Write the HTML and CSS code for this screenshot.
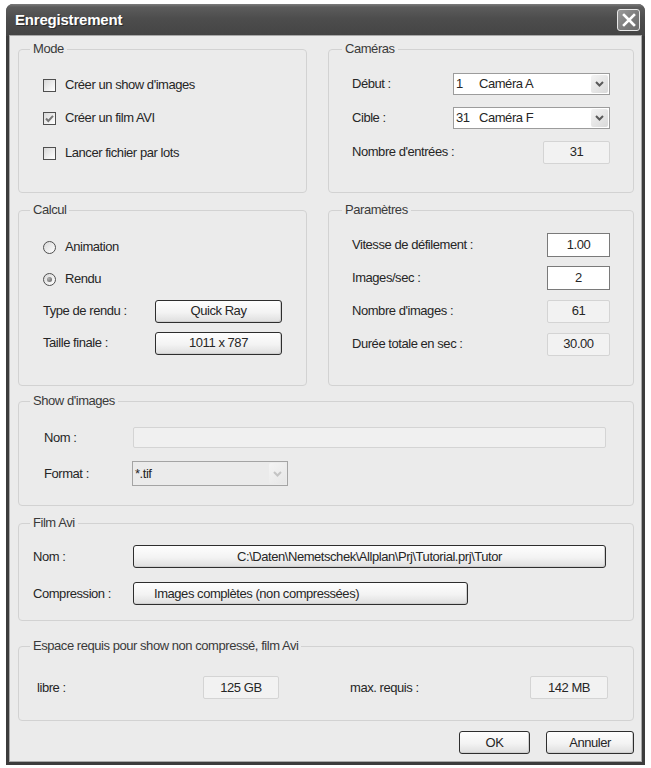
FILE: index.html
```html
<!DOCTYPE html>
<html lang="fr">
<head>
  <meta charset="UTF-8">
  <title>Enregistrement</title>
  <link rel="stylesheet" href="styles.css">
</head>
<body>
  <div class="window">
    <header class="titlebar">
      <span class="title">Enregistrement</span>
      <button class="close" aria-label="Fermer">
        <svg width="14" height="14" viewBox="0 0 14 14"><path d="M2 2 L12 12 M12 2 L2 12" stroke="#fff" stroke-width="2.6" stroke-linecap="square"/></svg>
      </button>
    </header>

    <div class="dialog">
      <div class="pair pair-top">
        <section class="group group-mode">
          <span class="legend">Mode</span>
          <label class="check"><span class="box"></span>Créer un show d'images</label>
          <label class="check"><span class="box"><svg width="11" height="11" viewBox="0 0 11 11"><path d="M2 5.5 L4.3 8 L9 2.8" fill="none" stroke="#767676" stroke-width="2"/></svg></span>Créer un film AVI</label>
          <label class="check"><span class="box"></span>Lancer fichier par lots</label>
        </section>

        <section class="group group-cams">
          <span class="legend">Caméras</span>
          <div class="row">
            <span class="lbl lbl-cam">Début :</span>
            <div class="combo combo-cam">
              <span class="combo-text"><span class="num">1</span>Caméra A</span>
              <span class="combo-btn"><svg width="9" height="6" viewBox="0 0 9 6"><path d="M1 1 L4.5 4.5 L8 1" fill="none" stroke="#5a5a5a" stroke-width="2"/></svg></span>
            </div>
          </div>
          <div class="row">
            <span class="lbl lbl-cam">Cible :</span>
            <div class="combo combo-cam">
              <span class="combo-text"><span class="num">31</span>Caméra F</span>
              <span class="combo-btn"><svg width="9" height="6" viewBox="0 0 9 6"><path d="M1 1 L4.5 4.5 L8 1" fill="none" stroke="#5a5a5a" stroke-width="2"/></svg></span>
            </div>
          </div>
          <div class="row">
            <span class="lbl">Nombre d'entrées :</span>
            <span class="readout readout-cam">31</span>
          </div>
        </section>
      </div>

      <div class="pair pair-mid">
        <section class="group group-calc">
          <span class="legend">Calcul</span>
          <label class="radio"><span class="dot"></span>Animation</label>
          <label class="radio"><span class="dot on"></span>Rendu</label>
          <div class="row">
            <span class="lbl lbl-calc">Type de rendu :</span>
            <button class="btn btn-calc">Quick Ray</button>
          </div>
          <div class="row">
            <span class="lbl lbl-calc">Taille finale :</span>
            <button class="btn btn-calc">1011 x 787</button>
          </div>
        </section>

        <section class="group group-params">
          <span class="legend">Paramètres</span>
          <div class="row">
            <span class="lbl">Vitesse de défilement :</span>
            <span class="edit">1.00</span>
          </div>
          <div class="row">
            <span class="lbl">Images/sec :</span>
            <span class="edit">2</span>
          </div>
          <div class="row">
            <span class="lbl">Nombre d'images :</span>
            <span class="readout">61</span>
          </div>
          <div class="row">
            <span class="lbl">Durée totale en sec :</span>
            <span class="readout">30.00</span>
          </div>
        </section>
      </div>

      <section class="group group-show">
        <span class="legend">Show d'images</span>
        <div class="row">
          <span class="lbl lbl-show">Nom :</span>
          <span class="field-off"></span>
        </div>
        <div class="row">
          <span class="lbl lbl-show">Format :</span>
          <div class="combo combo-off">
            <span class="combo-text">*.tif</span>
            <span class="combo-btn"><svg width="9" height="6" viewBox="0 0 9 6"><path d="M1 1 L4.5 4.5 L8 1" fill="none" stroke="#c4c4c4" stroke-width="2"/></svg></span>
          </div>
        </div>
      </section>

      <section class="group group-avi">
        <span class="legend">Film Avi</span>
        <div class="row">
          <span class="lbl lbl-avi">Nom :</span>
          <button class="btn btn-path">C:\Daten\Nemetschek\Allplan\Prj\Tutorial.prj\Tutor</button>
        </div>
        <div class="row">
          <span class="lbl lbl-avi">Compression :</span>
          <button class="btn btn-codec">Images complètes (non compressées)</button>
        </div>
      </section>

      <section class="group group-space">
        <span class="legend">Espace requis pour show non compressé, film Avi</span>
        <div class="row">
          <span class="lbl lbl-free">libre :</span>
          <span class="readout readout-free">125 GB</span>
          <span class="lbl lbl-max">max. requis :</span>
          <span class="readout readout-max">142 MB</span>
        </div>
      </section>

      <div class="actions">
        <button class="btn btn-ok">OK</button>
        <button class="btn btn-cancel">Annuler</button>
      </div>
    </div>
  </div>
</body>
</html>
```

FILE: styles.css
```css
body {
  margin: 0;
  background: #fff;
  font-family: "Liberation Sans", Arial, sans-serif;
  font-size: 13px;
  letter-spacing: -0.45px;
  line-height: 16px;
  color: #262626;
}

/* window frame */
.window {
  margin: 4px 0 0 6px;
  width: 639px;
  height: 761px;
  display: flex;
  flex-direction: column;
  background: #3c3c3c;
  border-radius: 7px 7px 0 0;
  overflow: hidden;
}
.titlebar {
  height: 32px;
  flex: none;
  display: flex;
  align-items: center;
  justify-content: space-between;
  padding: 0 5px 0 9px;
  background: linear-gradient(#7c7c7c 0, #5c5c5c 3px, #4d4d4d 45%, #444 100%);
}
.title {
  color: #fff;
  font-weight: bold;
  font-size: 15px;
  letter-spacing: -0.2px;
  text-shadow: 1px 1px 0 #2b2b2b;
}
.close {
  width: 23px;
  height: 22px;
  padding: 0;
  display: flex;
  align-items: center;
  justify-content: center;
  border: 1px solid #e8e8e8;
  border-radius: 3px;
  background: linear-gradient(135deg, #9a9a9a, #7a7a7a 60%, #6c6c6c);
}

.dialog {
  flex: 1;
  margin: 0 4px 4px;
  padding: 13px 7px 0 8px;
  background: #ebebeb;
  box-shadow: 0 0 0 1px #a8a8a8;
}

/* group boxes */
.group {
  position: relative;
  box-sizing: border-box;
  border: 1px solid #d2d2d2;
  border-radius: 4px;
  display: flex;
  flex-direction: column;
}
.legend {
  position: absolute;
  top: -9px;
  left: 11px;
  padding: 0 3px;
  background: #ebebeb;
  color: #3a3a3a;
}
.group-cams .legend,
.group-params .legend { left: 13px; }

.pair {
  display: grid;
  grid-template-columns: 289px 306px;
  column-gap: 21px;
}
.pair-top { height: 144px; }
.pair-mid { height: 176px; margin-top: 17px; }

.row {
  display: flex;
  align-items: center;
}
.lbl { white-space: nowrap; }

/* Mode */
.group-mode { padding: 25px 0 0 24px; gap: 13px; }
.check, .radio {
  height: 20px;
  display: flex;
  align-items: center;
  gap: 9px;
}
.check:last-child { margin-top: 2px; }
.box {
  width: 13px;
  height: 13px;
  box-sizing: border-box;
  border: 1px solid #4f4f4f;
  background: linear-gradient(135deg, #d8d8d8, #f4f4f4 70%, #fff);
  display: flex;
  align-items: center;
  justify-content: center;
}

/* Caméras */
.group-cams { padding: 23px 23px 0; gap: 12px; }
.group-cams .row { height: 22px; }
.lbl-cam { width: 101px; }
.combo {
  height: 22px;
  box-sizing: border-box;
  border: 1px solid #9c9c9c;
  background: #fff;
  display: flex;
  align-items: center;
}
.combo-cam { width: 157px; }
.combo-text {
  flex: 1;
  padding-left: 2px;
  display: flex;
}
.num { width: 23px; }
.combo-btn {
  width: 17px;
  height: 18px;
  margin-right: 1px;
  border-radius: 2px;
  background: linear-gradient(135deg, #f4f4f4, #d9d9d9);
  display: flex;
  align-items: center;
  justify-content: center;
}

.readout {
  margin-left: auto;
  width: 63px;
  height: 23px;
  box-sizing: border-box;
  border: 1px solid #d4d4d4;
  border-radius: 2px;
  background: #f2f2f2;
  display: flex;
  align-items: center;
  justify-content: center;
}
.readout-cam { width: 67px; }

/* Calcul */
.group-calc { padding: 25px 0 0 24px; gap: 10px; }
.group-calc .row { height: 22px; }
.radio { height: 22px; }
.dot {
  width: 13px;
  height: 13px;
  box-sizing: border-box;
  border: 1px solid #4f4f4f;
  border-radius: 50%;
  background: linear-gradient(135deg, #d8d8d8, #fff);
  display: flex;
  align-items: center;
  justify-content: center;
}
.dot.on::after {
  content: "";
  width: 5px;
  height: 5px;
  border-radius: 50%;
  background: radial-gradient(circle at 35% 35%, #b0b0b0, #5e5e5e);
}
.lbl-calc { width: 112px; }

.btn {
  height: 23px;
  box-sizing: border-box;
  padding: 0;
  border: 1px solid #2e2e2e;
  border-radius: 3px;
  background: linear-gradient(#fefefe, #f3f3f3 55%, #dedede);
  box-shadow: inset -1px -1px 0 #cfcfcf;
  font: inherit;
  letter-spacing: inherit;
  color: #262626;
}
.btn-calc { width: 127px; }

/* Paramètres */
.group-params { padding: 22px 23px 0; gap: 9px; }
.group-params .row { height: 24px; }
.edit {
  margin-left: auto;
  width: 63px;
  height: 24px;
  box-sizing: border-box;
  border: 1px solid #7a7a7a;
  background: #fff;
  display: flex;
  align-items: center;
  justify-content: center;
}

/* Show d'images */
.group-show {
  height: 105px;
  margin-top: 15px;
  padding: 24px 27px 0 25px;
  gap: 13px;
}
.group-show .row { height: 23px; }
.lbl-show { width: 89px; }
.field-off {
  flex: 1;
  height: 21px;
  box-sizing: border-box;
  border: 1px solid #d4d4d4;
  border-radius: 2px;
  background: #f0f0f0;
}
.combo-off {
  width: 156px;
  height: 25px;
  margin-left: -1px;
  border-color: #a4a4a4;
  background: #ebebeb;
}
.combo-off .combo-btn {
  height: 21px;
  background: linear-gradient(135deg, #f4f4f4, #e6e6e6);
}

/* Film Avi */
.group-avi {
  height: 98px;
  margin-top: 17px;
  padding: 21px 27px 0 14px;
  gap: 14px;
}
.group-avi .row { height: 23px; }
.lbl-avi { width: 100px; }
.btn-path { flex: 1; }
.btn-codec {
  width: 335px;
  text-align: left;
  padding-left: 20px;
}

/* Espace requis */
.group-space {
  height: 75px;
  margin-top: 25px;
  padding: 29px 0 0 18px;
}
.lbl-free { width: 166px; }
.readout-free { margin-left: 0; width: 76px; }
.lbl-max { margin-left: 71px; width: 180px; }
.readout-max { margin-left: 0; width: 78px; }

/* bottom buttons */
.actions {
  margin-top: 10px;
  display: flex;
  justify-content: flex-end;
  gap: 16px;
}
.btn-ok { width: 71px; }
.btn-cancel { width: 88px; }
```
